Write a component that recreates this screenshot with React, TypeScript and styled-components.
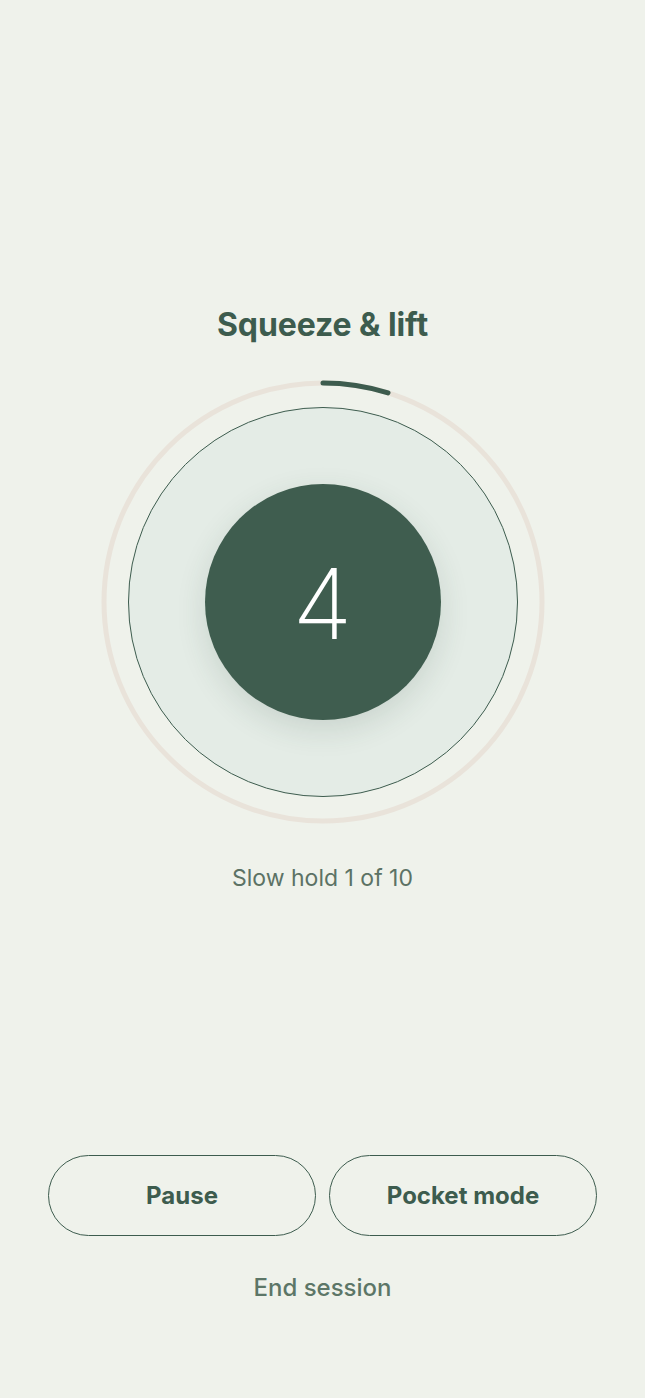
import React from "react";
import styled, { createGlobalStyle } from "styled-components";

const GlobalStyle = createGlobalStyle`
  html, body {
    margin: 0;
    padding: 0;
    background: #eff2eb;
  }
  body {
    font-family: Inter, "Noto Sans", "Liberation Sans", sans-serif;
    -webkit-font-smoothing: antialiased;
  }
`;

const Page = styled.div`
  min-height: 1398px;
  box-sizing: border-box;
  display: flex;
  flex-direction: column;
  align-items: center;
  padding: 307px 48px 0;
  background: #eff2eb;
`;

const Title = styled.h1`
  margin: 0;
  font-size: 32px;
  line-height: 36px;
  font-weight: 700;
  color: #3d5c4e;
  letter-spacing: -0.1px;
`;

const Dial = styled.div`
  position: relative;
  width: 448px;
  height: 448px;
  margin-top: 35px;
  display: grid;
  place-items: center;
`;

const RingSvg = styled.svg`
  position: absolute;
  inset: 0;
`;

const Inner = styled.div`
  width: 390px;
  height: 390px;
  box-sizing: border-box;
  border-radius: 50%;
  background: #e4ece6;
  border: 1px solid #3d5c4e;
  display: grid;
  place-items: center;
`;

const Core = styled.div`
  width: 236px;
  height: 236px;
  border-radius: 50%;
  background: #3f5d4f;
  box-shadow: 0 10px 30px rgba(40, 70, 55, 0.14);
  display: grid;
  place-items: center;
`;

const Count = styled.span`
  font-size: 98px;
  font-weight: 200;
  line-height: 1;
  color: #ffffff;
  margin-top: 4px;
`;

const Caption = styled.p`
  margin: 38px 0 0;
  font-size: 23px;
  line-height: 28px;
  font-weight: 400;
  color: #5c7265;
`;

const Spacer = styled.div`
  flex: 1;
`;

const ButtonRow = styled.div`
  display: grid;
  grid-template-columns: 1fr 1fr;
  gap: 13px;
  width: 100%;
`;

const PillButton = styled.button`
  height: 81px;
  border-radius: 41px;
  border: 1.5px solid #3d5c4e;
  background: transparent;
  font-family: inherit;
  font-size: 24px;
  font-weight: 700;
  color: #3d5c4e;
  cursor: pointer;
`;

const EndLink = styled.button`
  margin: 37px 0 95px;
  border: none;
  background: transparent;
  font-family: inherit;
  font-size: 24px;
  line-height: 28px;
  font-weight: 500;
  color: #5c7667;
  cursor: pointer;
`;

const R = 219;
const C = 2 * Math.PI * R;
const progress = 0.048;

export default function App() {
  return (
    <>
      <GlobalStyle />
      <Page>
        <Title>Squeeze &amp; lift</Title>
        <Dial>
          <RingSvg width="448" height="448" viewBox="0 0 448 448">
            <circle cx="224" cy="224" r={R} fill="none" stroke="#e9e3da" strokeWidth="5" />
            <circle
              cx="224"
              cy="224"
              r={R}
              fill="none"
              stroke="#3d5c4e"
              strokeWidth="5"
              strokeLinecap="round"
              strokeDasharray={`${C * progress} ${C}`}
              transform="rotate(-90 224 224)"
            />
          </RingSvg>
          <Inner>
            <Core>
              <Count>4</Count>
            </Core>
          </Inner>
        </Dial>
        <Caption>Slow hold 1 of 10</Caption>
        <Spacer />
        <ButtonRow>
          <PillButton>Pause</PillButton>
          <PillButton>Pocket mode</PillButton>
        </ButtonRow>
        <EndLink>End session</EndLink>
      </Page>
    </>
  );
}
